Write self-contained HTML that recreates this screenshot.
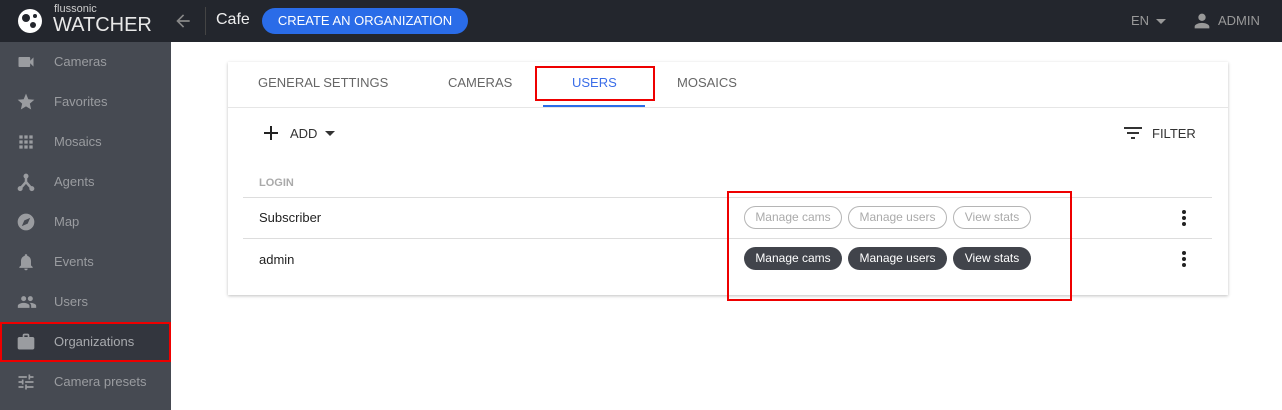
<!DOCTYPE html>
<html><head><style>
*{margin:0;padding:0;box-sizing:border-box}
body{width:1282px;height:410px;overflow:hidden;background:#fff;font-family:"Liberation Sans",Arial,sans-serif;position:relative}
.top{position:absolute;left:0;top:0;width:1282px;height:42px;background:#23262d}
.side{position:absolute;left:0;top:42px;width:171px;height:368px;background:#464a52}
.item{position:absolute;left:0;width:171px;height:40px;color:#9a9ca0;font-size:13px;line-height:40px;padding-left:54px}
.item svg{position:absolute;left:16px;top:10px}
.card{position:absolute;left:228px;top:62px;width:1000px;height:233px;background:#fff;box-shadow:0 1px 3px rgba(0,0,0,.25)}
.tab{position:absolute;top:0;height:45px;line-height:42px;font-size:13px;color:#666}
.chip{position:absolute;height:23px;border-radius:12px;font-size:12px;line-height:21px;text-align:center}
.o{border:1px solid #b5b5b5;color:#aaa}
.d{background:#41444b;color:#fff;line-height:23px}
.line{position:absolute;left:15px;width:969px;height:1px;background:#ddd}
.dots{position:absolute;left:954px;width:4px}
.dots i{display:block;width:4px;height:4px;border-radius:2px;background:#222;margin-bottom:2px}
</style></head><body>
<div class="top">
 <svg style="position:absolute;left:16px;top:7px" width="30" height="28" viewBox="0 0 30 28"><circle cx="14" cy="14" r="12" fill="#fff"/><circle cx="10" cy="11" r="4" fill="#23262d"/><circle cx="17" cy="18" r="3" fill="#23262d"/><circle cx="19" cy="9" r="2" fill="#23262d"/></svg>
 <div style="position:absolute;left:54px;top:3px;color:#ccc;font-size:11px">flussonic</div>
 <div style="position:absolute;left:53px;top:14px;color:#e8e8e8;font-size:20px;font-weight:300">WATCHER</div>
 <svg style="position:absolute;left:173px;top:11px" width="20" height="20" viewBox="0 0 24 24"><path fill="#888" d="M20 11H7.8l5.6-5.6L12 4l-8 8 8 8 1.4-1.4L7.8 13H20z"/></svg>
 <div style="position:absolute;left:205px;top:7px;width:1px;height:28px;background:#444"></div>
 <div style="position:absolute;left:216px;top:11px;color:#eee;font-size:16px">Cafe</div>
 <div style="position:absolute;left:262px;top:8px;width:206px;height:26px;border-radius:13px;background:#2a6ce8;color:#fff;font-size:13px;line-height:26px;text-align:center">CREATE AN ORGANIZATION</div>
 <div style="position:absolute;left:1131px;top:13px;color:#999;font-size:13px">EN</div>
 <div style="position:absolute;left:1156px;top:19px;border:5px solid transparent;border-top-color:#999"></div>
 <svg style="position:absolute;left:1191px;top:10px" width="22" height="22" viewBox="0 0 24 24"><path fill="#999" d="M12 12a4 4 0 1 0 0-8 4 4 0 0 0 0 8zm0 2c-3 0-8 1.5-8 4v2h16v-2c0-2.5-5-4-8-4z"/></svg>
 <div style="position:absolute;left:1218px;top:13px;color:#999;font-size:13px">ADMIN</div>
</div>
<div class="side">
 <div class="item" style="top:0">Cameras<svg width="20" height="20" viewBox="0 0 24 24"><path fill="#9a9ca0" d="M17 10.5V7a1 1 0 0 0-1-1H4a1 1 0 0 0-1 1v10a1 1 0 0 0 1 1h12a1 1 0 0 0 1-1v-3.5l4 4v-11z"/></svg></div>
 <div class="item" style="top:40px">Favorites<svg width="20" height="20" viewBox="0 0 24 24"><path fill="#9a9ca0" d="M12 17.3l6.2 3.7-1.6-7 5.4-4.7-7.2-.6L12 2 9.2 8.7 2 9.3l5.4 4.7-1.6 7z"/></svg></div>
 <div class="item" style="top:80px">Mosaics<svg width="20" height="20" viewBox="0 0 24 24"><path fill="#9a9ca0" d="M4 4h4v4H4zm6 0h4v4h-4zm6 0h4v4h-4zM4 10h4v4H4zm6 0h4v4h-4zm6 0h4v4h-4zM4 16h4v4H4zm6 0h4v4h-4zm6 0h4v4h-4z"/></svg></div>
 <div class="item" style="top:120px">Agents<svg width="20" height="20" viewBox="0 0 24 24"><path fill="none" stroke="#9a9ca0" stroke-width="3" d="M12 3v9l-7 8m7-8l7 8"/><circle cx="12" cy="5" r="3" fill="#9a9ca0"/><circle cx="5" cy="20" r="3" fill="#9a9ca0"/><circle cx="19" cy="20" r="3" fill="#9a9ca0"/></svg></div>
 <div class="item" style="top:160px">Map<svg width="20" height="20" viewBox="0 0 24 24"><circle cx="12" cy="12" r="10" fill="#9a9ca0"/><path fill="#464a52" d="M17 7l-3 7-7 3 3-7z"/></svg></div>
 <div class="item" style="top:200px">Events<svg width="20" height="20" viewBox="0 0 24 24"><path fill="#9a9ca0" d="M12 22a2 2 0 0 0 2-2h-4a2 2 0 0 0 2 2zm6-6v-5c0-3-1.6-5.6-4.5-6.3V4a1.5 1.5 0 0 0-3 0v.7C7.6 5.4 6 8 6 11v5l-2 2v1h16v-1z"/></svg></div>
 <div class="item" style="top:240px">Users<svg width="22" height="20" viewBox="0 0 24 24"><path fill="#9a9ca0" d="M16 11a3 3 0 1 0 0-6 3 3 0 0 0 0 6zm-8 0a3 3 0 1 0 0-6 3 3 0 0 0 0 6zm0 2c-2.3 0-7 1.2-7 3.5V19h14v-2.5C15 14.2 10.3 13 8 13zm8 0h-1c1.2.8 2 2 2 3.5V19h6v-2.5c0-2.3-4.7-3.5-7-3.5z"/></svg></div>
 <div class="item" style="top:280px;background:#33363e;border:2px solid #e00;color:#a8aaae;padding-left:52px;line-height:36px">Organizations<svg style="left:14px;top:8px" width="20" height="20" viewBox="0 0 24 24"><path fill="#9a9ca0" d="M14 6V4h-4v2zM4 8v11h16V8zm16-2c1.1 0 2 .9 2 2v11c0 1.1-.9 2-2 2H4c-1.1 0-2-.9-2-2V8c0-1.1.9-2 2-2h4V4c0-1.1.9-2 2-2h4c1.1 0 2 .9 2 2v2z"/><rect x="3" y="7" width="18" height="13" fill="#9a9ca0"/></svg></div>
 <div class="item" style="top:320px">Camera presets<svg width="20" height="20" viewBox="0 0 24 24"><path fill="#9a9ca0" d="M3 17v2h6v-2zM3 5v2h10V5zm10 16v-2h8v-2h-8v-2h-2v6zM7 9v2H3v2h4v2h2V9zm14 4v-2H11v2zm-6-4h2V7h4V5h-4V3h-2z"/></svg></div>
</div>
<div class="card">
 <div style="position:absolute;left:0;top:45px;width:1000px;height:1px;background:#e6e6e6"></div>
 <div class="tab" style="left:30px">GENERAL SETTINGS</div>
 <div class="tab" style="left:220px">CAMERAS</div>
 <div class="tab" style="left:344px;color:#3b6ee8">USERS</div>
 <div class="tab" style="left:449px">MOSAICS</div>
 <div style="position:absolute;left:315px;top:43px;width:102px;height:2px;background:#2a6ce8"></div>
 <div style="position:absolute;left:307px;top:4px;width:120px;height:35px;border:2px solid #e00"></div>
 <svg style="position:absolute;left:35px;top:63px" width="16" height="16" viewBox="0 0 16 16"><path fill="#222" d="M7 1h2v14H7z M1 7h14v2H1z"/></svg>
 <div style="position:absolute;left:62px;top:64px;font-size:13px;color:#333">ADD</div>
 <div style="position:absolute;left:97px;top:69px;border:5px solid transparent;border-top-color:#333"></div>
 <svg style="position:absolute;left:895px;top:63px" width="20" height="16" viewBox="0 0 20 16"><path fill="#333" d="M1 2h18v2H1zm3 5h12v2H4zm4 5h4v2H8z"/></svg>
 <div style="position:absolute;left:924px;top:64px;font-size:13px;color:#333">FILTER</div>
 <div style="position:absolute;left:31px;top:115px;font-size:11px;color:#aaa;font-weight:bold">LOGIN</div>
 <div class="line" style="top:135px"></div>
 <div class="line" style="top:176px"></div>
 <div style="position:absolute;left:31px;top:148px;font-size:13px;color:#222">Subscriber</div>
 <div style="position:absolute;left:31px;top:190px;font-size:13px;color:#222">admin</div>
 <div class="chip o" style="left:516px;top:144px;width:98px">Manage cams</div>
 <div class="chip o" style="left:620px;top:144px;width:99px">Manage users</div>
 <div class="chip o" style="left:725px;top:144px;width:78px">View stats</div>
 <div class="chip d" style="left:516px;top:185px;width:98px">Manage cams</div>
 <div class="chip d" style="left:620px;top:185px;width:99px">Manage users</div>
 <div class="chip d" style="left:725px;top:185px;width:78px">View stats</div>
 <div class="dots" style="top:148px"><i></i><i></i><i></i></div>
 <div class="dots" style="top:189px"><i></i><i></i><i></i></div>
</div>
<div style="position:absolute;left:727px;top:191px;width:345px;height:110px;border:2px solid #e00"></div>
</body></html>
